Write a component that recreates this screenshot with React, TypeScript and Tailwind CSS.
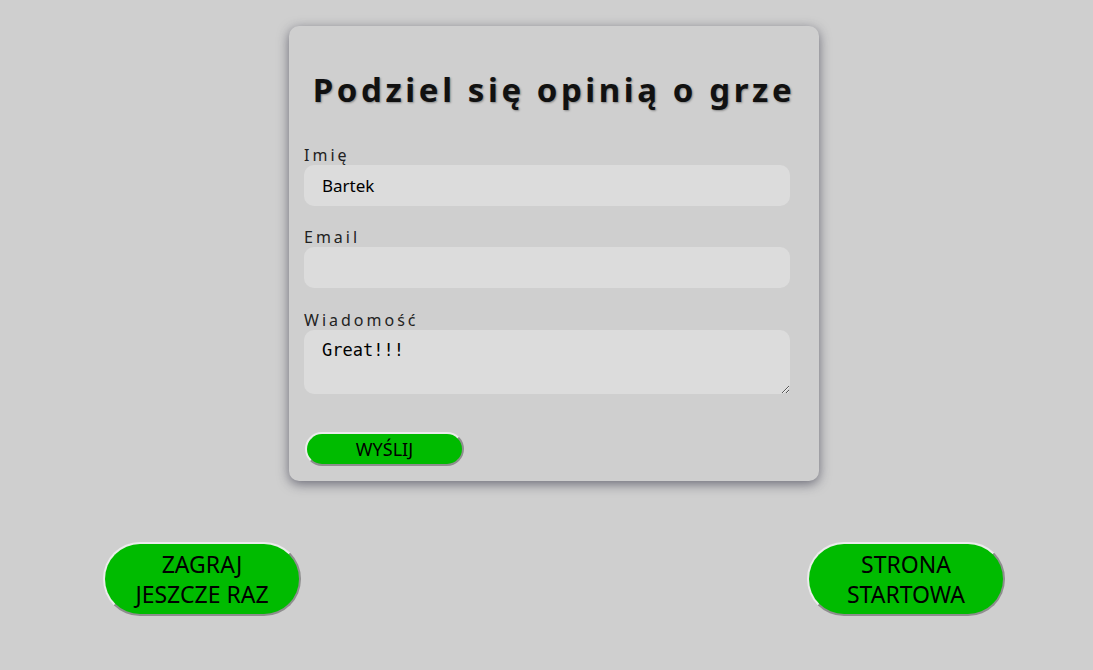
import React, { useState } from "react";

const font = "font-['Noto_Sans','Open_Sans',sans-serif]";

const BigButton = ({ children }: { children: React.ReactNode }) => (
  <button
    className={`w-[198px] h-[74px] rounded-full bg-[#00bb00] text-[23px] leading-[30px] text-black border-2 border-solid border-t-[#ececec] border-l-[#ececec] border-r-[#8e8e8e] border-b-[#8e8e8e] ${font}`}
  >
    {children}
  </button>
);

const Field = ({
  label,
  children,
  className,
}: {
  label: string;
  children: React.ReactNode;
  className?: string;
}) => (
  <div className={className}>
    <label className="block text-[16px] leading-[20px] tracking-[3px] text-[#222]">
      {label}
    </label>
    {children}
  </div>
);

export default function App() {
  const [name, setName] = useState("Bartek");
  const [email, setEmail] = useState("");
  const [msg, setMsg] = useState("Great!!!");

  return (
    <div className={`min-h-[670px] bg-[#cfcfcf] pt-[26px] ${font}`}>
      <div className="flex justify-center pl-[15px]">
        <form
          className="w-[530px] rounded-[10px] bg-[#cfcfcf] px-[15px] pt-[44px] pb-[15px] shadow-[0_3px_12px_rgba(40,40,60,0.6)]"
          onSubmit={(e) => e.preventDefault()}
        >
          <h1 className="text-center text-[33px] leading-[40px] font-bold tracking-[3.6px] text-[#111] [text-shadow:1px_1px_2px_#888]">
            Podziel się opinią o grze
          </h1>

          <Field label="Imię" className="mt-[35px]">
            <input
              value={name}
              onChange={(e) => setName(e.target.value)}
              className="block w-[486px] h-[41px] rounded-[10px] bg-[#dcdcdc] px-[18px] text-[17px] text-black outline-none"
            />
          </Field>

          <Field label="Email" className="mt-[21px]">
            <input
              value={email}
              onChange={(e) => setEmail(e.target.value)}
              className="block w-[486px] h-[41px] rounded-[10px] bg-[#dcdcdc] px-[18px] text-[17px] text-black outline-none"
            />
          </Field>

          <Field label="Wiadomość" className="mt-[22px]">
            <textarea
              value={msg}
              onChange={(e) => setMsg(e.target.value)}
              className="block w-[486px] h-[64px] rounded-[10px] bg-[#dcdcdc] px-[18px] py-[8px] text-[17px] leading-[24px] text-black outline-none font-['DejaVu_Sans_Mono',monospace]"
            />
          </Field>

          <button
            type="submit"
            className="mt-[38px] ml-px block w-[159px] h-[34px] rounded-full bg-[#00bb00] text-[18px] leading-[22px] text-black border-2 border-solid border-t-[#ececec] border-l-[#ececec] border-r-[#8e8e8e] border-b-[#8e8e8e]"
          >
            WYŚLIJ
          </button>
        </form>
      </div>

      <div className="flex justify-between pl-[103px] pr-[88px] mt-[61px]">
        <BigButton>
          ZAGRAJ
          <br />
          JESZCZE RAZ
        </BigButton>
        <BigButton>
          STRONA
          <br />
          STARTOWA
        </BigButton>
      </div>
    </div>
  );
}
